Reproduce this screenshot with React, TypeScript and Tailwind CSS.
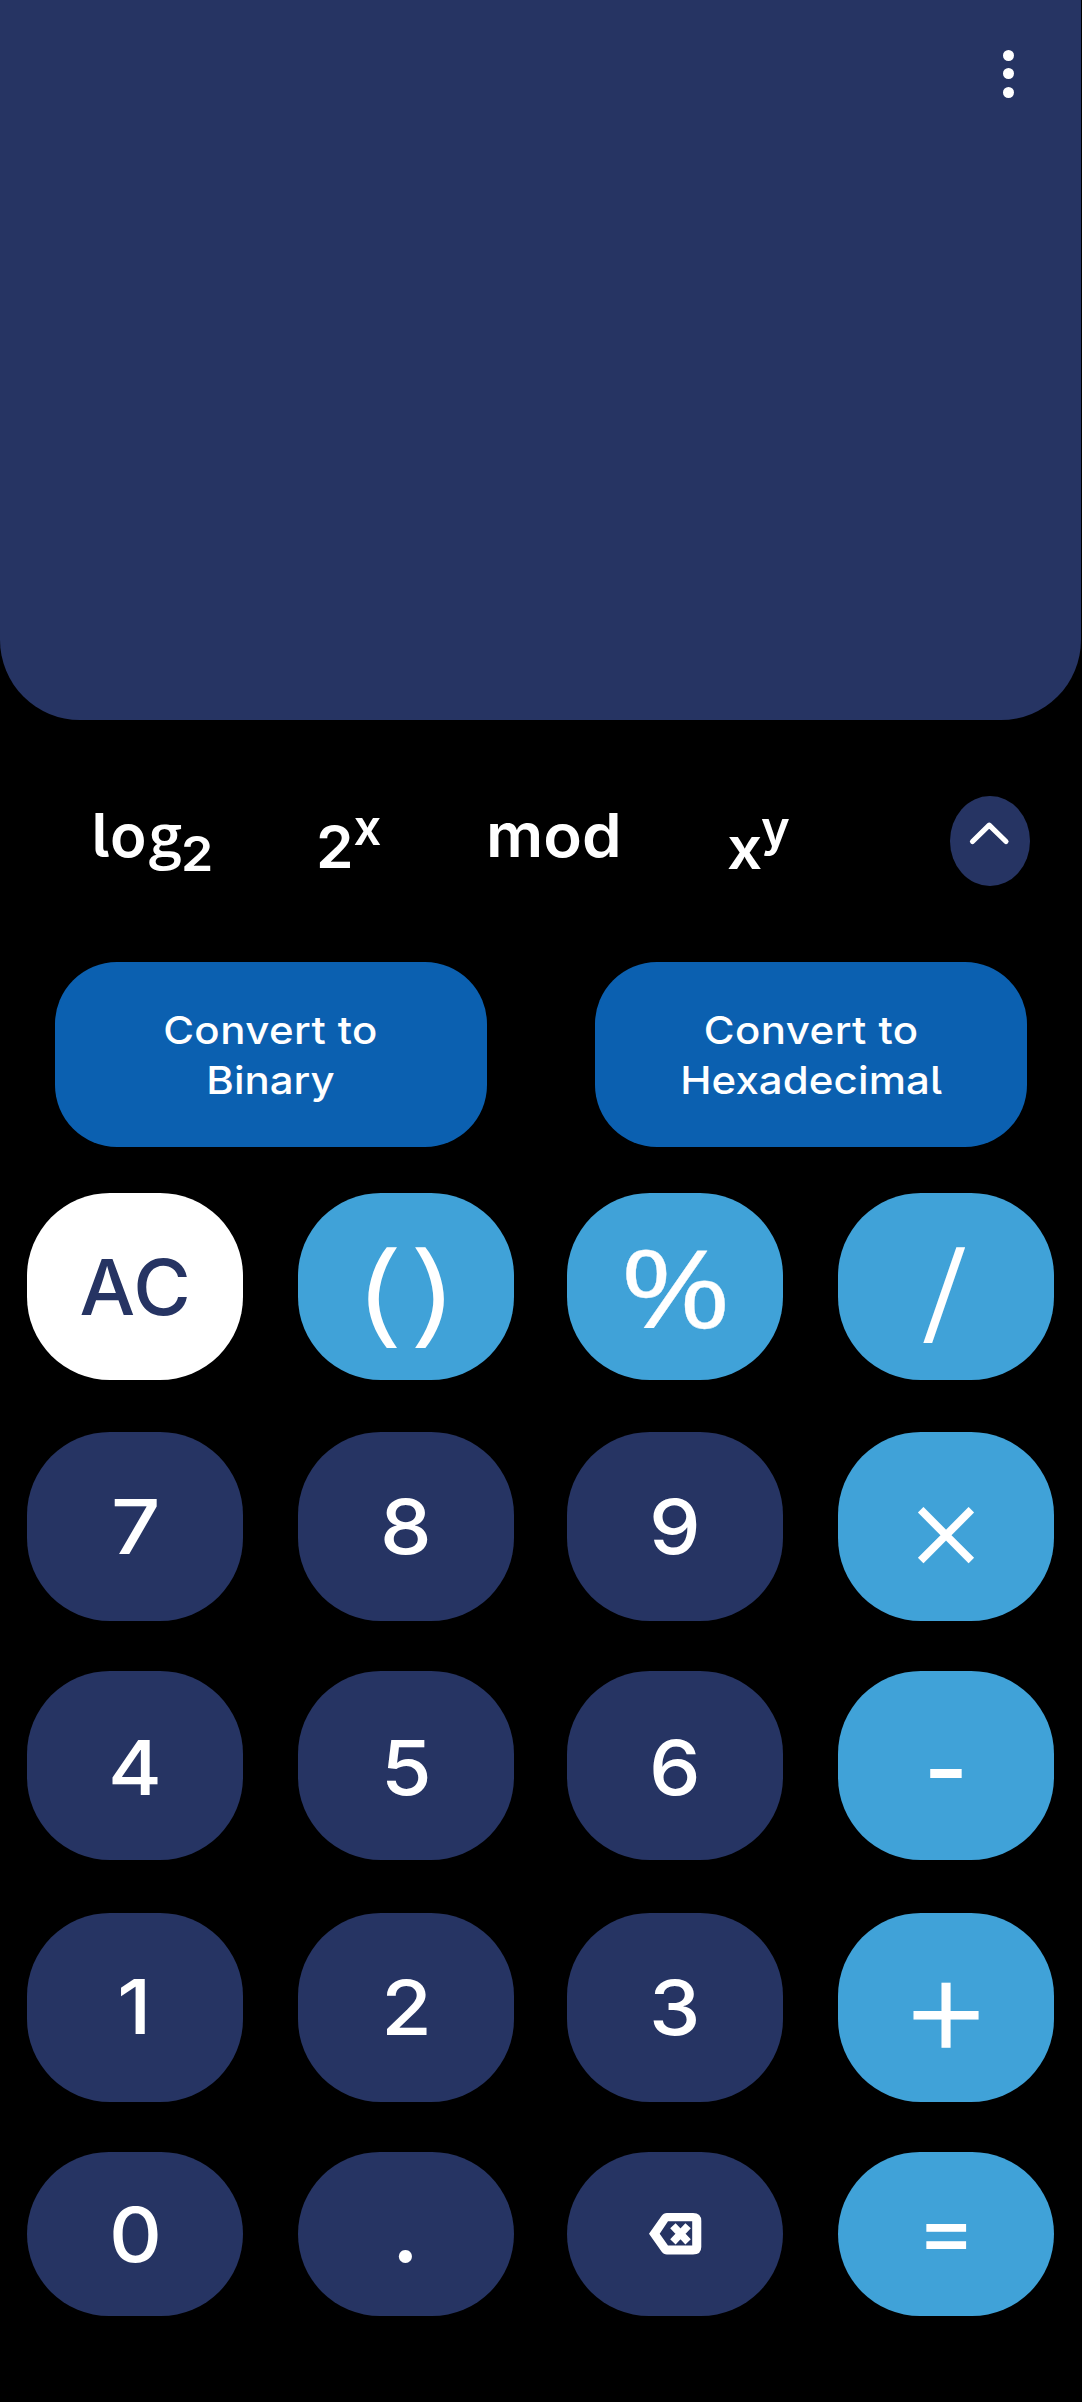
import type { ReactNode } from "react";

type KeyProps = {
  children: ReactNode;
  bg?: string;
  text?: string;
  height?: string;
};

function Key({
  children,
  bg = "bg-[#263463]",
  text = "text-[76px] font-[550] scale-x-[1.08]",
  height = "h-[189px]",
}: KeyProps) {
  return (
    <button className={`flex w-[216px] items-center justify-center rounded-[83px] text-white ${height} ${bg}`}>
      <span className={`inline-block leading-none whitespace-pre ${text}`}>{children}</span>
    </button>
  );
}

function BackspaceIcon() {
  return (
    <svg width="53" height="42" viewBox="0 0 53 42" fill="none" className="block">
      <path
        fill="white"
        fillRule="evenodd"
        d="M18 0H44Q52.3 0 52.3 8V34Q52.3 41.6 44 41.6H18Q14.5 41.6 12.5 38.6L0 20.8L12.5 3Q14.5 0 18 0ZM19 8.2L10.7 20.8L19 32.4H43.2V8.2Z"
      />
      <path stroke="white" strokeWidth="7.4" d="M23.9 12.7L39.1 28.9M39.1 12.7L23.9 28.9" />
    </svg>
  );
}

const LIGHT = "bg-[#40a2d8]";
const TOP = "h-[187px]";
const BOTTOM = "h-[164px]";

export default function App() {
  return (
    <main className="flex h-[2402px] w-[1082px] flex-col overflow-hidden bg-black font-['Inter',sans-serif] text-white [font-feature-settings:'cv05']">
      <section className="flex h-[720px] w-[1081px] shrink-0 justify-end rounded-b-[80px] bg-[#263463] pt-[49.5px] pr-[67px]">
        <button aria-label="Menu" className="flex h-[48px] w-[12px] flex-col items-center gap-[7.5px]">
          <i className="size-[11px] shrink-0 rounded-full bg-white" />
          <i className="size-[11px] shrink-0 rounded-full bg-white" />
          <i className="size-[11px] shrink-0 rounded-full bg-white" />
        </button>
      </section>

      <nav className="flex h-[241.7px] shrink-0 items-start pt-[75.7px] pl-[91.6px] leading-none font-[580]">
        <div className="mt-[9.5px] flex w-[224.2px] items-baseline text-[60px]">
          <span className="w-[57.2px] tracking-[1.5px]">lo</span>
          <span className="w-[32.4px] font-['Open_Sans'] leading-[0] font-semibold">g</span>
          <span className="origin-left translate-y-[13.5px] scale-x-[1.08] text-[48px] leading-[0]">2</span>
        </div>
        <div className="mt-[23.8px] flex w-[170.2px] items-baseline text-[57.5px]">
          <span className="w-[37.6px] origin-left scale-x-[1.05]">2</span>
          <span className="-translate-y-[22.7px] text-[49px] leading-[0]">x</span>
        </div>
        <div className="mt-[9.5px] w-[241px] origin-left scale-x-[1.06] text-[60px]">mod</div>
        <div className="mt-[23px] flex w-[223.5px] items-baseline text-[58px]">
          <span className="w-[34px] origin-left scale-x-[1.07]">x</span>
          <span className="-translate-y-[22.7px] text-[49px] leading-[0]">y</span>
        </div>
        <button aria-label="Collapse" className="flex h-[90.3px] w-[80px] justify-center rounded-[50%] bg-[#263463] pt-[24px]">
          <svg width="44" height="30" viewBox="0 0 44 30" fill="none" className="block">
            <path d="M4.5 21.5L21.2 5.2L38 21.5" stroke="white" strokeWidth="5.2" strokeLinecap="round" strokeLinejoin="round" />
          </svg>
        </button>
      </nav>

      <section className="flex h-[185px] shrink-0 gap-[107.5px] pl-[54.5px] text-[38.5px] leading-[50px] font-[540]">
        <button className="flex w-[432.5px] items-center justify-center rounded-[62px] bg-[#0b60b0] pt-[2px]">
          <span className="scale-x-[1.09] text-center tracking-[0.4px]">
            Convert to<br />
            <span className="tracking-normal">Binary</span>
          </span>
        </button>
        <button className="flex w-[432.5px] items-center justify-center rounded-[62px] bg-[#0b60b0] pt-[2px]">
          <span className="scale-x-[1.09] text-center tracking-[0.4px]">
            Convert to<br />
            <span className="tracking-[0.1px]">Hexadecimal</span>
          </span>
        </button>
      </section>

      <section className="mt-[46.3px] grid shrink-0 grid-cols-[271px_268.7px_271px_216px] grid-rows-[239px_239.3px_241.5px_239.2px_164px] items-start pl-[27.3px]">
        <Key height={TOP} bg="bg-white" text="text-[77px] font-[530] text-[#263463] tracking-[1px] scale-x-[1.02] translate-x-[0.5px] translate-y-[0.8px]">AC</Key>
        <Key height={TOP} bg={LIGHT} text="text-[111px] font-[330] tracking-[1px] scale-x-[1.4] translate-y-[5.5px]">()</Key>
        <Key height={TOP} bg={LIGHT} text="text-[108px] font-['Open_Sans'] font-normal scale-x-[1.25] translate-x-[1px] translate-y-[1px] [-webkit-text-stroke:0.3px_white]">%</Key>
        <Key height={TOP} bg={LIGHT} text="text-[110px] font-[350] scale-x-[1.28] -translate-x-[2px] translate-y-[5px]">/</Key>

        <Key text="text-[76px] font-[550] scale-x-[1.14]">7</Key>
        <Key>8</Key>
        <Key>9</Key>
        <Key bg={LIGHT} text="text-[126px] font-[350] -translate-y-[1px]">×</Key>

        <Key text="text-[76px] font-[550] scale-x-[1.08] translate-y-[0.7px]">4</Key>
        <Key text="text-[76px] font-[550] scale-x-[1.08] translate-y-[0.7px]">5</Key>
        <Key text="text-[76px] font-[550] scale-x-[1.08] translate-y-[0.7px]">6</Key>
        <Key bg={LIGHT} text="text-[97px] font-medium translate-y-[2px]">-</Key>

        <Key text="text-[76px] font-[550] scale-x-[1.08] -translate-x-[1.5px] -translate-y-[0.7px]">1</Key>
        <Key>2</Key>
        <Key>3</Key>
        <Key bg={LIGHT} text="text-[144px] font-light -translate-y-[3px]">+</Key>

        <Key height={BOTTOM}>0</Key>
        <Key height={BOTTOM} text="text-[90px] font-medium -translate-x-[1px] -translate-y-[4px]">.</Key>
        <Key height={BOTTOM} text="translate-x-[1px]"><BackspaceIcon /></Key>
        <Key height={BOTTOM} bg={LIGHT} text="text-[82px] font-[450] scale-x-[1.06] -translate-y-[3.5px]">=</Key>
      </section>
    </main>
  );
}
